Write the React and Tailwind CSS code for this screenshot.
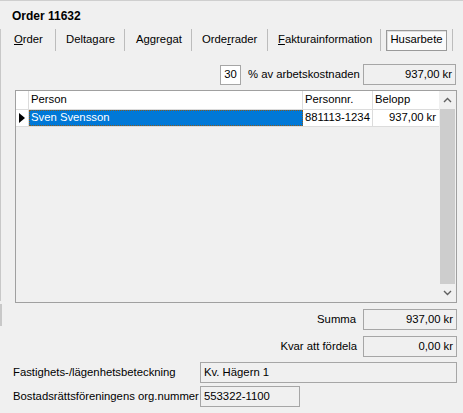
import React from "react";

const font = { fontFamily: '"Liberation Sans", Arial, sans-serif' };

function Tab({ children, className = "" }) {
  return <div className={`h-[21px] flex items-center ${className}`}>{children}</div>;
}

function Sep() {
  return <div className="w-px h-[22px] bg-[#bcbcbc] shrink-0" />;
}

function ReadBox({ className = "", children, right }) {
  return (
    <div
      className={`h-[21px] border border-[#a6a6a6] bg-[#f0f0f0] flex items-center px-[3px] ${
        right ? "justify-end" : ""
      } ${className}`}
    >
      {children}
    </div>
  );
}

export default function App() {
  return (
    <div
      className="w-[463px] h-[413px] bg-[#f0f0f0] text-[11.3px] text-black border-t border-[#cfcfcf] relative overflow-hidden leading-none whitespace-nowrap"
      style={font}
    >
      {/* left edge */}
      <div className="absolute left-0 top-[28px] h-[272px] w-px bg-[#c8c8c8]" />
      <div className="absolute left-0 top-[303px] h-[22px] w-[2px] bg-[#c8c8c8]" />

      <div className="pl-[12px] pt-[9px] font-bold text-[12px]">Order 11632</div>

      {/* tabs */}
      <div className="flex items-center mt-[7px] pl-[14px] h-[22px]">
        <Tab className="w-[41px]">
          <span>
            <u>O</u>rder
          </span>
        </Tab>
        <Sep />
        <Tab className="w-[68px] pl-[10px]">Deltagare</Tab>
        <Sep />
        <Tab className="w-[66px] pl-[11px]">Aggregat</Tab>
        <Sep />
        <Tab className="w-[75px] pl-[10px]">
          <span>
            Orde<u>r</u>rader
          </span>
        </Tab>
        <Sep />
        <Tab className="w-[112px] pl-[10px]">
          <span>
            <u>F</u>akturainformation
          </span>
        </Tab>
        <Sep />
        <div className="w-[5px]" />
        <div className="h-[21px] w-[61px] flex items-center justify-center border border-[#9a9a9a] bg-[#fafafa] shadow-[inset_1px_1px_0_#e0e0e0]">
          Husarbete
        </div>
        <div className="w-[5px]" />
        <Sep />
      </div>

      {/* percentage row */}
      <div className="flex items-center mt-[13px] pl-[220px]">
        <div className="w-[21px] h-[20px] border border-[#a6a6a6] bg-white flex items-center justify-center">
          30
        </div>
        <div className="ml-[7px] w-[115px]">% av arbetskostnaden</div>
        <ReadBox className="w-[93px]" right>
          937,00 kr
        </ReadBox>
      </div>

      {/* grid */}
      <div className="ml-[15px] mt-[5px] w-[442px] h-[213px] border border-[#a0a0a0] flex">
        <div className="flex-1 flex flex-col">
          <div className="flex h-[19px] bg-white border-b border-[#dcdcdc]">
            <div className="w-[13px] border-r border-[#dcdcdc]" />
            <div className="w-[274px] border-r border-[#dcdcdc] flex items-center pl-[2px]">Person</div>
            <div className="w-[70px] border-r border-[#dcdcdc] flex items-center pl-[2px]">Personnr.</div>
            <div className="flex-1 flex items-center pl-[2px]">Belopp</div>
          </div>
          <div className="flex h-[17px] bg-white border-b border-[#dcdcdc]">
            <div className="w-[13px] border-r border-[#dcdcdc] flex items-center justify-center">
              <svg width="6" height="10" viewBox="0 0 6 10">
                <path d="M0 0 L6 5 L0 10 Z" fill="#000" />
              </svg>
            </div>
            <div className="w-[274px] bg-[#0078d7] text-white border border-dotted border-[#8a5a1a] flex items-center pl-[1px]">
              Sven Svensson
            </div>
            <div className="w-[70px] border-r border-[#dcdcdc] flex items-center pl-[2px]">881113-1234</div>
            <div className="flex-1 flex items-center justify-end pr-[3px]">937,00 kr</div>
          </div>
        </div>
        {/* scrollbar */}
        <div className="w-[17px] bg-[#f0f0f0] flex flex-col items-center">
          <div className="h-[18px] flex items-center justify-center">
            <svg width="9" height="6" viewBox="0 0 9 6">
              <path d="M1 5 L4.5 1.5 L8 5" stroke="#606060" strokeWidth="1.4" fill="none" />
            </svg>
          </div>
          <div className="w-[15px] flex-1 bg-[#cdcdcd]" />
          <div className="h-[18px] flex items-center justify-center">
            <svg width="9" height="6" viewBox="0 0 9 6">
              <path d="M1 1 L4.5 4.5 L8 1" stroke="#606060" strokeWidth="1.4" fill="none" />
            </svg>
          </div>
        </div>
      </div>

      {/* totals */}
      <div className="flex items-center justify-end mt-[6px] pr-[6px]">
        <div className="mr-[7px]">Summa</div>
        <ReadBox className="w-[94px]" right>
          937,00 kr
        </ReadBox>
      </div>
      <div className="flex items-center justify-end mt-[6px] pr-[6px]">
        <div className="mr-[6px]">Kvar att fördela</div>
        <ReadBox className="w-[94px]" right>
          0,00 kr
        </ReadBox>
      </div>

      {/* property fields */}
      <div className="flex items-center mt-[5px] pl-[13px]">
        <div className="w-[187px]">Fastighets-/lägenhetsbeteckning</div>
        <ReadBox className="w-[257px] h-[19px]">Kv. Hägern 1</ReadBox>
      </div>
      <div className="flex items-center mt-[3px] pl-[13px]">
        <div className="w-[187px]">Bostadsrättsföreningens org.nummer</div>
        <ReadBox className="w-[100px] h-[19px]">553322-1100</ReadBox>
      </div>
    </div>
  );
}
